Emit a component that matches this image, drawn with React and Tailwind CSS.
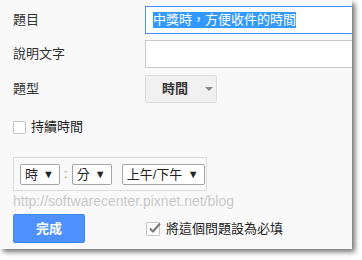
const FONT = { fontFamily: '"Liberation Sans", "Noto Sans CJK TC", sans-serif' };

function Select({ label, width }) {
  return (
    <div className={`flex items-center justify-between h-[21px] ${width} border border-[#a6a6a6] rounded-[2px] bg-white pl-[4px] pr-[5px] text-[13px] leading-none text-[#222]`}>
      <span>{label}</span>
      <span className="text-[11px]">▼</span>
    </div>
  );
}

export default function App() {
  return (
    <div className="w-[362px] h-[260px] bg-white" style={FONT}>
      <div className="w-[352px] h-[249px] bg-[#f9f9f9] overflow-hidden shadow-[3px_3px_5px_rgba(0,0,0,0.55)] pl-[13px] pt-[6px] text-[13px] text-[#333]">
        <div className="flex items-center h-[28px]">
          <div className="w-[132px] shrink-0">題目</div>
          <div className="flex items-center shrink-0 w-[230px] h-[28px] border border-[#4d90fe] bg-white pl-[7px]">
            <span className="bg-[#3399ff] text-white leading-[16px]">中獎時，方便收件的時間</span>
          </div>
        </div>

        <div className="flex items-center h-[28px] mt-[6px]">
          <div className="w-[132px] shrink-0">說明文字</div>
          <div className="shrink-0 w-[230px] h-[28px] border border-[#c9c9c9] bg-white" />
        </div>

        <div className="flex items-center h-[28px] mt-[7px]">
          <div className="w-[132px] shrink-0">題型</div>
          <div className="flex items-center shrink-0 w-[72px] h-[28px] border border-[#dcdcdc] rounded-[2px] bg-[#f1f1f1]">
            <span className="ml-[16px] font-bold text-[#333]">時間</span>
            <svg className="ml-[17px]" width="8" height="4" viewBox="0 0 8 4"><path d="M0 0h8L4 4z" fill="#888" /></svg>
          </div>
        </div>

        <div className="flex items-center h-[14px] mt-[17px] text-[#222]">
          <div className="w-[13px] h-[13px] border border-[#c6c6c6] rounded-[1px] bg-white" />
          <span className="ml-[5px]">持續時間</span>
        </div>

        <div className="flex items-center w-[194px] h-[34px] mt-[23px] border border-[#dcdcdc] pl-[6px]">
          <Select label="時" width="w-[40px]" />
          <span className="mx-[4px] text-[#c0803f]">:</span>
          <Select label="分" width="w-[40px]" />
          <div className="ml-[10px]">
            <Select label="上午/下午" width="w-[83px]" />
          </div>
        </div>

        <div className="mt-[2px] h-[16px] leading-[16px] text-[14px] text-[#c9c9c9]">http://softwarecenter.pixnet.net/blog</div>

        <div className="flex items-center mt-[5px]">
          <div className="flex items-center justify-center w-[72px] h-[29px] border border-[#3f85f5] rounded-[2px] bg-[#4d90fe] text-white font-bold">完成</div>
          <div className="ml-[61px] flex items-center text-[#222]">
            <div className="relative w-[14px] h-[14px] border border-[#c6c6c6] rounded-[1px] bg-white">
              <svg className="absolute left-[1px] top-[-2px]" width="14" height="14" viewBox="0 0 14 14">
                <path d="M2 7.5l3 3 7-8" fill="none" stroke="#777" strokeWidth="2" />
              </svg>
            </div>
            <span className="ml-[6px]">將這個問題設為必填</span>
          </div>
        </div>
      </div>
    </div>
  );
}
